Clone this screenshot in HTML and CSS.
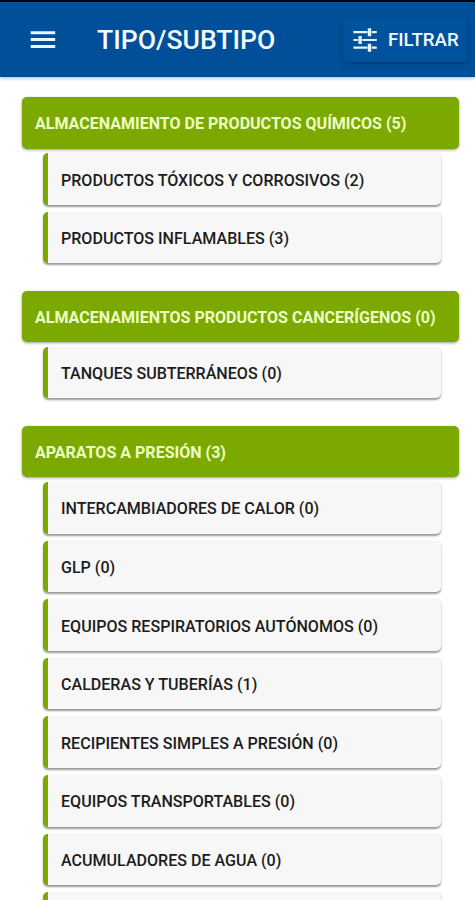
FILE: index.html
```html
<!DOCTYPE html>
<html lang="es">
<head>
    <meta charset="UTF-8">
    <meta name="viewport" content="width=device-width, initial-scale=1.0">
    <title>Tipo/Subtipo</title>
    <link rel="stylesheet" href="styles.css">
</head>
<body>
    <header class="toolbar">
        <button class="menu-button" aria-label="Menú">
            <svg width="26" height="18" viewBox="0 0 26 18" fill="#e8f6ff">
                <path d="M.7 0.3h24.5v3H.7zM.7 7.1h24.5v3H.7zM.7 14h24.5v3H.7z"/>
            </svg>
        </button>
        <h1>TIPO/SUBTIPO</h1>
        <button class="filter-button">
            <svg width="24" height="24" viewBox="0 0 24 24" fill="#e8f6ff">
                <path d="M.4 3h14v2.2H.4zM18.8 3h5v2.2h-5zM14.8.2h3.4v8h-3.4zM.4 10.9h4.4v2.2H.4zM9.4 10.9h14.4v2.2H9.4zM5.4 8h3.4v8H5.4zM.4 18.6h14v2.2H.4zM18.8 18.6h5v2.2h-5zM14.8 15.7h3.4v8h-3.4z"/>
            </svg>
            FILTRAR
        </button>
    </header>

    <main class="content">
        <section class="group">
            <h2>ALMACENAMIENTO DE PRODUCTOS QUÍMICOS (5)</h2>
            <ul>
                <li>PRODUCTOS TÓXICOS Y CORROSIVOS (2)</li>
                <li>PRODUCTOS INFLAMABLES (3)</li>
            </ul>
        </section>
        <section class="group">
            <h2>ALMACENAMIENTOS PRODUCTOS CANCERÍGENOS (0)</h2>
            <ul>
                <li>TANQUES SUBTERRÁNEOS (0)</li>
            </ul>
        </section>
        <section class="group">
            <h2>APARATOS A PRESIÓN (3)</h2>
            <ul>
                <li>INTERCAMBIADORES DE CALOR (0)</li>
                <li>GLP (0)</li>
                <li>EQUIPOS RESPIRATORIOS AUTÓNOMOS (0)</li>
                <li>CALDERAS Y TUBERÍAS (1)</li>
                <li>RECIPIENTES SIMPLES A PRESIÓN (0)</li>
                <li>EQUIPOS TRANSPORTABLES (0)</li>
                <li>ACUMULADORES DE AGUA (0)</li>
                <li></li>
            </ul>
        </section>
    </main>
</body>
</html>
```

FILE: styles.css
```css
* {
    box-sizing: border-box;
}
body {
    margin: 0;
    height: 900px;
    overflow: hidden;
    background-color: #fff;
    font-family: Roboto, sans-serif;
}
h1, h2, ul {
    margin: 0;
    padding: 0;
}
button {
    border: none;
    padding: 0;
    background: none;
    color: #fff;
    font-family: inherit;
}
svg {
    display: block;
    flex: none;
}
.toolbar {
    display: flex;
    align-items: center;
    height: 77px;
    padding: 1px 8px 0 30px;
    border-top: 2px solid #000;
    background-color: #004f98;
    box-shadow: 0 1px 4px rgba(0, 0, 0, 0.3);
    color: #f4faff;
}
.menu-button {
    width: 67px;
}
h1 {
    padding-bottom: 2px;
    font-size: 26.6px;
    font-weight: 500;
    white-space: nowrap;
}
.filter-button {
    display: flex;
    align-items: center;
    gap: 11px;
    width: 124px;
    height: 43px;
    margin-left: auto;
    padding-left: 10px;
    border-radius: 4px;
    background-color: #00529c;
    box-shadow: 0 2px 4px rgba(0, 0, 0, 0.25);
    color: #f4faff;
    font-size: 18.7px;
    font-weight: 500;
}
.content {
    height: 823px;
    padding: 20px 16px 0 22px;
    overflow: hidden;
}
.group {
    margin-bottom: 27.3px;
}
h2,
li {
    display: flex;
    align-items: center;
    height: 51.5px;
    font-weight: 500;
    white-space: nowrap;
}
h2 {
    padding: 2px 13px 0;
    border-radius: 5px;
    background-color: #7ca900;
    box-shadow: 0 1px 3px rgba(0, 0, 0, 0.4);
    color: #edffc4;
    font-size: 16.05px;
    font-weight: 700;
}
ul {
    display: grid;
    gap: 7.1px;
    margin: 4.8px 18px 0 21px;
    list-style: none;
}
li {
    padding: 2px 13px 0;
    border-left: 5px solid #7ca900;
    border-radius: 5px;
    background-color: #f7f7f7;
    box-shadow: 0 1.5px 2px rgba(0, 0, 0, 0.4);
    color: #1c1c1c;
    font-size: 16.07px;
}
```
